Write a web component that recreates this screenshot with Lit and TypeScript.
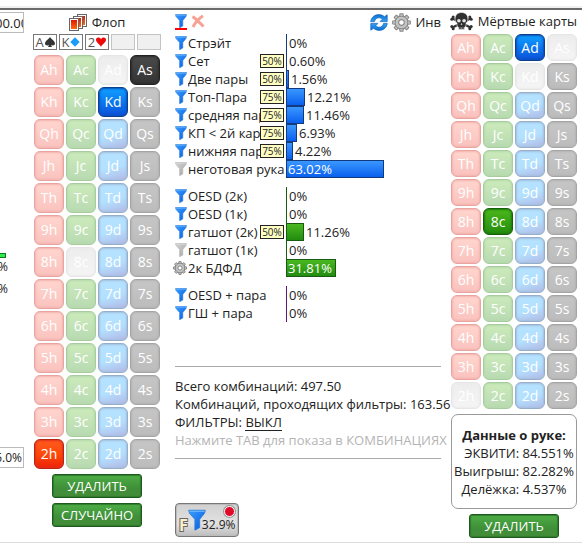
import { LitElement, html, css, svg } from "lit";
import { customElement, property } from "lit/decorators.js";
import { classMap } from "lit/directives/class-map.js";

const RANKS = ["A", "K", "Q", "J", "T", "9", "8", "7", "6", "5", "4", "3", "2"];
const SUITS = ["h", "c", "d", "s"];

type Row = { name: string; value: string; tag?: string; icon: "blue" | "grey" | "gear" };

const GROUPS: { tone: string; rows: Row[] }[] = [
  {
    tone: "made",
    rows: [
      { name: "Стрэйт", value: "0%", icon: "blue" },
      { name: "Сет", value: "0.60%", tag: "50%", icon: "blue" },
      { name: "Две пары", value: "1.56%", tag: "50%", icon: "blue" },
      { name: "Топ-Пара", value: "12.21%", tag: "75%", icon: "blue" },
      { name: "средняя пара", value: "11.46%", tag: "75%", icon: "blue" },
      { name: "КП < 2й карты", value: "6.93%", tag: "75%", icon: "blue" },
      { name: "нижняя пара", value: "4.22%", tag: "75%", icon: "blue" },
      { name: "неготовая рука", value: "63.02%", icon: "grey" },
    ],
  },
  {
    tone: "draw",
    rows: [
      { name: "OESD (2к)", value: "0%", icon: "blue" },
      { name: "OESD (1к)", value: "0%", icon: "blue" },
      { name: "гатшот (2к)", value: "11.26%", tag: "50%", icon: "blue" },
      { name: "гатшот (1к)", value: "0%", icon: "grey" },
      { name: "2к БДФД", value: "31.81%", icon: "gear" },
    ],
  },
  {
    tone: "combo",
    rows: [
      { name: "OESD + пара", value: "0%", icon: "blue" },
      { name: "ГШ + пара", value: "0%", icon: "blue" },
    ],
  },
];

const funnel = (kind: string, w = 12, h = 14) => html`
  <svg width=${w} height=${h} viewBox="0 0 12 14" aria-hidden="true">
    <defs>
      <linearGradient id="funnel-${kind}" x1="0" y1="0" x2="1" y2="1">
        <stop offset="0" stop-color=${kind === "blue" ? "#3ea0ff" : "#d6d6d6"} />
        <stop offset="1" stop-color=${kind === "blue" ? "#0058e0" : "#a2a2a2"} />
      </linearGradient>
    </defs>
    <path d="M.5 .5H11.5L11 2.5 7.800 6.500V12L4.600 13.800V6.500L1 2.500Z" fill="url(#funnel-${kind})"
      stroke=${kind === "blue" ? "#2a7ad6" : "#b4b4b4"} stroke-width=".6" />
    <path d="M1 1.2H11" stroke=${kind === "blue" ? "#6bb8ff" : "#dcdcdc"} stroke-width=".8" />
  </svg>`;

const gear = (size: number, dark: string) => html`
  <svg width=${size} height=${size} viewBox="-10 -10 20 20" aria-hidden="true">
    <g fill="#c4c4c4" stroke=${dark} stroke-width="1.1">
      ${[0, 45, 90, 135].map((a) => svg`<path transform="rotate(${a})" d="M-2.2 -6 -1.5 -9.3H1.5L2.2 -6V6L1.5 9.3H-1.5L-2.2 6Z" />`)}
      <circle r="6.6" />
    </g>
    <circle r="6" fill="#c4c4c4" />
    <circle r="3" fill="#fff" stroke=${dark} stroke-width="1.2" />
  </svg>`;

const arrow = "M.7 7.6C1.2 3.400 4.600.6 8.800.6c2.300 0 4.200.8 5.600 2.200L17.200.8V7.600H10.200L12.300 5.200C11.300 4.200 10.200 3.800 8.900 3.800 6.700 3.800 5 5.200 4.400 7.600Z";

const refresh = html`
  <svg width="18" height="17" viewBox="0 0 18 17" aria-hidden="true">
    <defs>
      <linearGradient id="arrow" x1="0" y1="0" x2="0" y2="1">
        <stop offset="0" stop-color="#0f6fd0" /><stop offset="1" stop-color="#2ea2f8" />
      </linearGradient>
    </defs>
    <g fill="url(#arrow)" stroke="#0d62b8" stroke-width=".7" stroke-linejoin="round">
      <path d=${arrow} /><path transform="rotate(180 9 8.5)" d=${arrow} />
    </g>
  </svg>`;

const skull = html`
  <svg width="23" height="19" viewBox="0 0 23 19" aria-hidden="true">
    <path d="M2.5 6.5 20.5 15.5M20.5 6.5 2.5 15.5" stroke="#303030" stroke-width="2.2" stroke-linecap="round" />
    <g fill="#303030">
      <circle cx="1.8" cy="7.2" r="1.5" /><circle cx="3.2" cy="4.9" r="1.5" />
      <circle cx="21.2" cy="7.2" r="1.5" /><circle cx="19.8" cy="4.9" r="1.5" />
      <circle cx="1.8" cy="14.6" r="1.5" /><circle cx="3.2" cy="16.8" r="1.5" />
      <circle cx="21.2" cy="14.6" r="1.5" /><circle cx="19.8" cy="16.8" r="1.5" />
    </g>
    <path d="M11.5.5c4 0 6.4 2.6 6.4 6.2 0 2.3-.7 3.5-1.9 4.4V14l-1.6 1.4v2H8.6v-2L7 14v-2.9C5.800 10.200 5.100 9 5.100 6.700 5.100 3.100 7.500.5 11.500.5Z" fill="#303030" stroke="#fff" stroke-width=".6" />
    <circle cx="8.9" cy="8.8" r="1.8" fill="#e4e4e4" />
    <circle cx="14.1" cy="8.8" r="1.8" fill="#e4e4e4" />
    <path d="M11.5 11 10.5 12.8H12.5Z" fill="#e4e4e4" />
    <path d="M10 15V17M11.5 15V17M13 15V17" stroke="#bbb" stroke-width=".5" />
  </svg>`;

const stack = html`
  <svg width="18" height="17" viewBox="0 0 18 17" aria-hidden="true">
    <defs>
      <linearGradient id="cards" x1="0" y1="0" x2="0" y2="1">
        <stop offset="0" stop-color="#e01800" /><stop offset="1" stop-color="#ff6a10" />
      </linearGradient>
    </defs>
    <g fill="#fff" stroke="#666" stroke-width="1">
      <rect x="8.5" y=".5" width="9" height="12" /><rect x="10" y="2" width="6" height="9" fill="url(#cards)" stroke="none" />
      <rect x="4.5" y="2.5" width="9" height="12" /><rect x="6" y="4" width="6" height="9" fill="url(#cards)" stroke="none" />
      <rect x=".5" y="4.5" width="9" height="12" /><rect x="2" y="6" width="6" height="9" fill="url(#cards)" stroke="none" />
    </g>
  </svg>`;

const suitShape: Record<string, unknown> = {
  s: svg`<path fill="#333" d="M5 0C6 2 10 4 10 6.500 10 8.400 7.500 9 6 7.800L7 10H3L4 7.800C2.500 9 0 8.400 0 6.500 0 4 4 2 5 0Z" />`,
  d: svg`<path fill="#1a9cf8" d="M5 .3 9.700 5 5 9.700 .3 5Z" />`,
  h: svg`<path fill="#ee0a0a" d="M5 9.800C4 7.600 0 5.600 0 2.800 0 0 4 0 5 2.200 6 0 10 0 10 2.800 10 5.600 6 7.600 5 9.800Z" />`,
};

@customElement("card-grid")
export class CardGrid extends LitElement {
  @property({ type: Array }) picked: string[] = [];
  @property({ type: Array }) used: string[] = [];
  @property({ type: Boolean, reflect: true }) compact = false;

  static styles = css`
    :host { display: grid; grid-template-columns: repeat(4, 30px); gap: 2px; --h: 30px; }
    :host([compact]) { --h: 27px; }
    button {
      box-sizing: border-box; height: var(--h); padding: 0; border: 1px solid; border-radius: 6px;
      font: 14px "Open Sans", "Noto Sans", sans-serif; color: #fff; line-height: 20px;
      box-shadow: inset 0 0 2px 1px var(--edge);
    }
    .h { --edge: #f4b4b0; border-color: #eaa4a0; background: linear-gradient(#ffd6ce, #fac2be); }
    .c { --edge: #b6daaa; border-color: #a6cd9e; background: linear-gradient(#cdebbb, #b8dab2); }
    .d { --edge: #a4c0de; border-color: #94aecb; background: linear-gradient(165deg, #b4e2ff 20%, #b2e0ff 55%, #b4b8e4); }
    .s { --edge: #b4b4b4; border-color: #a4a4a4; background: linear-gradient(#c6c6c6, #bcbcbc); }
    .used { --edge: #ebebeb; border-color: #e6e6e6; background: linear-gradient(#ededed, #f5f5f5); }
    .on.h { --edge: #e2321a; border-color: #b82412; background: linear-gradient(#ff5a20, #ff4a08 50%, #ee2008); }
    .on.c { --edge: #1c7a0a; border-color: #14600a; background: linear-gradient(#4cb81c, #228c0c); }
    .on.d { --edge: #0a50b8; border-color: #0c3f90; background: linear-gradient(#10a0ff, #0a78f0 50%, #0c50d8); }
    .on.s { --edge: #2c2c2c; border-color: #222; background: linear-gradient(#4a4a4a, #343434); }
  `;

  render() {
    return RANKS.flatMap((r) =>
      SUITS.map((s) => {
        const id = r + s;
        const used = this.used.includes(id);
        return html`<button class=${classMap({ [s]: !used, used, on: this.picked.includes(id) })}>${id}</button>`;
      })
    );
  }
}

@customElement("app-root")
export class AppRoot extends LitElement {
  static styles = css`
    :host {
      display: block; background: #fff; color: #222; overflow: hidden;
      font: 13px/18px "Open Sans", "Noto Sans", sans-serif;
    }
    .strip { height: 8px; box-sizing: border-box; border-bottom: 2px solid #f0f0f0; }
    main {
      display: grid; grid-template-columns: 24px 126px minmax(0, 1fr) 126px; column-gap: 10px;
      border-top: 2px solid #6a6a6a; border-bottom: 1px solid #ddd; padding-right: 5px;
    }
    main > * { min-width: 0; }
    svg { flex: none; display: block; }
    button { font: inherit; color: inherit; }
    .side { display: flex; flex-direction: column; align-items: flex-end; padding-top: 2px; overflow: hidden; }
    .side input {
      box-sizing: border-box; width: 40px; height: 21px; flex: none; border: 1px solid #bbb; padding: 0 0 0 10px;
      font: inherit; color: #222; background: #fff;
    }
    .side .foot { margin-bottom: 74px; padding: 0 1px 0 0; text-align: right; font-size: 12px; }
    .mid { flex: 1; width: 100%; display: flex; flex-direction: column; padding-top: 220px; box-sizing: border-box; }
    .meter { width: 6px; height: 5px; box-sizing: border-box; border: 1px solid #0a7a1c; border-left: 0; background: #30e850; }
    .pct { width: 8px; height: 22px; line-height: 17px; font-size: 12px; display: flex; justify-content: flex-end; }
    .flop { padding-bottom: 15px; display: flex; flex-direction: column; align-items: center; }
    h2 { margin: 0; font: inherit; display: flex; align-items: center; justify-content: center; gap: 5px; white-space: nowrap; }
    .flop h2 { height: 24px; }
    .slots { display: flex; gap: 2px; margin-bottom: 5px; }
    .slot {
      box-sizing: border-box; width: 24px; height: 16px; border: 1px solid #777; background: #fff;
      display: flex; align-items: center; justify-content: center; gap: 1px; color: #555; line-height: 14px;
    }
    .slot.empty { border-color: #c4c4c4; background: #f0f0f0; }
    .green {
      box-sizing: border-box; width: 90px; height: 24px; border: 1px solid #1e5a1e; border-radius: 3px; padding: 0;
      background: linear-gradient(#4eae46, #3f8f38 60%, #458c3a); color: #fff; line-height: 20px;
      box-shadow: inset 0 0 1px 1px #2f7d2c;
    }
    .flop .green { margin-top: 5px; }
    .filters { padding-left: 5px; display: flex; flex-direction: column; align-items: stretch; }
    .bar { height: 24px; display: flex; align-items: center; gap: 4px; line-height: 16px; }
    .tool { border: 0; background: none; padding: 0; display: flex; align-items: center; }
    .tool.first { border-bottom: 2px solid #f00; }
    .bar .push { margin-left: auto; }
    .group { margin-bottom: 9px; }
    .row { display: grid; grid-template-columns: 13px 98px 1fr; height: 18px; align-items: center; }
    .row .gear { margin-left: -2px; }
    .name { position: relative; display: block; height: 18px; white-space: nowrap; }
    .name span { display: block; width: 97px; overflow: hidden; }
    .name span.cut { width: 72px; }
    .tag {
      position: absolute; right: 2px; top: 2px; box-sizing: border-box; width: 24px; height: 14px; border: 1px solid #222;
      background: #ffffc4; font-size: 10px; line-height: 12px; text-align: center;
    }
    .chart { display: flex; height: 18px; align-items: center; gap: 2px; white-space: nowrap; }
    .fill { box-sizing: border-box; height: 18px; min-width: 1px; border: 1px solid var(--line); background: var(--bg); line-height: 16px; padding-left: 1px; color: #fff; }
    .fill.thin { border-width: 0 0 0 1px; padding: 0; }
    .made { --line: #123a80; --bg: linear-gradient(#3a98ff, #0a60ee); }
    .draw { --line: #185c14; --bg: linear-gradient(#4ab820, #228c10); }
    .combo { --line: #5a1878; --bg: #5a1878; }
    .stats { margin: 35px 0 0; padding: 10px 0 9px; border: 1px solid #aaa; border-width: 1px 0; white-space: nowrap; }
    .stats p { margin: 0; }
    .stats a { color: inherit; text-decoration: none; border-bottom: 1px solid #222; display: inline-block; line-height: 15px; }
    .hint { color: #b4b4b4; }
    .f {
      box-sizing: border-box; width: 64px; height: 34px; margin-top: 44px; border: 1px solid #777; border-radius: 4px;
      background: linear-gradient(#d0d0d0, #e2e2e2 60%, #bdbdbd); padding: 0 2px 0 3px; display: flex; align-items: center; position: relative;
      box-shadow: inset 0 0 0 1px #bbb; font-size: 12px;
    }
    .f b { font-size: 16px; line-height: 16px; align-self: flex-end; margin-bottom: 3px; color: #fff0c8; -webkit-text-stroke: 2px #666; paint-order: stroke fill; }
    .f i { font-style: normal; align-self: flex-end; line-height: 18px; margin-bottom: 2px; margin-left: -4px; }
    .f .dot { position: absolute; right: 3px; top: 2px; width: 11px; height: 11px; box-sizing: border-box; border-radius: 50%; border: 1px solid #fff; background: #e00a28; box-shadow: 0 0 0 1px #999; }
    .dead { display: flex; flex-direction: column; align-items: center; }
    .dead h2 { height: 22px; align-self: flex-end; margin-bottom: 2px; }
    .info { box-sizing: border-box; width: 100%; border: 1px solid #999; border-radius: 7px; margin: 5px 0; padding: 11px 0 10px; text-align: center; white-space: nowrap; }
    .info p { margin: 0; }
    .info .r { padding-left: 10px; }
  `;

  private renderRow(r: Row) {
    const w = Math.round(parseFloat(r.value) * 1.56);
    const inside = w > 45;
    return html`<div class="row">
      ${r.icon === "gear" ? html`<div class="gear">${gear(14, "#777")}</div>` : funnel(r.icon)}
      <div class="name"><span class=${classMap({ cut: !!r.tag })}>${r.name}</span>${r.tag ? html`<div class="tag">${r.tag}</div>` : ""}</div>
      <div class="chart">
        <div class=${classMap({ fill: true, thin: w < 2 })} style="width:${Math.max(w, 1)}px">${inside ? r.value : ""}</div>
        ${inside ? "" : r.value}
      </div>
    </div>`;
  }

  render() {
    return html`
      <div class="strip"></div>
      <main>
        <section class="side">
          <input aria-label="Стек" value="00.000" />
          <div class="mid"><div class="meter"></div><div class="pct">%</div><div class="pct">%</div></div>
          <input class="foot" aria-label="Процент" value="5.0%" />
        </section>
        <section class="flop">
          <h2>${stack} Флоп</h2>
          <div class="slots">
            ${["As", "Kd", "2h"].map((c) => html`<div class="slot">${c[0]}<svg width="10" height="10" viewBox="0 0 10 10">${suitShape[c[1]]}</svg></div>`)}
            <div class="slot empty"></div><div class="slot empty"></div>
          </div>
          <card-grid .picked=${["As", "Kd", "2h"]} .used=${["Ad", "8c"]}></card-grid>
          <button class="green">УДАЛИТЬ</button>
          <button class="green">СЛУЧАЙНО</button>
        </section>
        <section class="filters">
          <div class="bar">
            <button class="tool first" aria-label="Фильтр">${funnel("blue")}</button>
            <button class="tool" aria-label="Сбросить">
              <svg width="14" height="14" viewBox="0 0 14 14"><path d="M1.500 1.500C5 4 9 8 12.500 11.500M12 .8C8 3.500 4 8 2 12" fill="none" stroke="#f6a295" stroke-width="3" /></svg>
            </button>
            <button class="tool push" aria-label="Обновить">${refresh}</button>
            <button class="tool" aria-label="Настройки">${gear(19, "#888")}</button>
            <span>Инв</span>
          </div>
          ${GROUPS.map((g) => html`<div class="group ${g.tone}">${g.rows.map((r) => this.renderRow(r))}</div>`)}
          <div class="stats">
            <p>Всего комбинаций: 497.50</p>
            <p>Комбинаций, проходящих фильтры: 163.56</p>
            <p>ФИЛЬТРЫ: <a href="#">ВЫКЛ</a></p>
            <p class="hint">Нажмите TAB для показа в КОМБИНАЦИЯХ</p>
          </div>
          <button class="f"><b>F</b>${funnel("blue", 18, 22)}<i>32.9%</i><span class="dot"></span></button>
        </section>
        <section class="dead">
          <h2>${skull} Мёртвые карты</h2>
          <card-grid compact .picked=${["Ad", "8c"]} .used=${["As", "Kd", "2h"]}></card-grid>
          <div class="info">
            <p><b>Данные о руке:</b></p>
            <p class="r">ЭКВИТИ: 84.551%</p>
            <p>Выигрыш: 82.282%</p>
            <p>Делёжка: 4.537%</p>
          </div>
          <button class="green">УДАЛИТЬ</button>
        </section>
      </main>
    `;
  }
}
